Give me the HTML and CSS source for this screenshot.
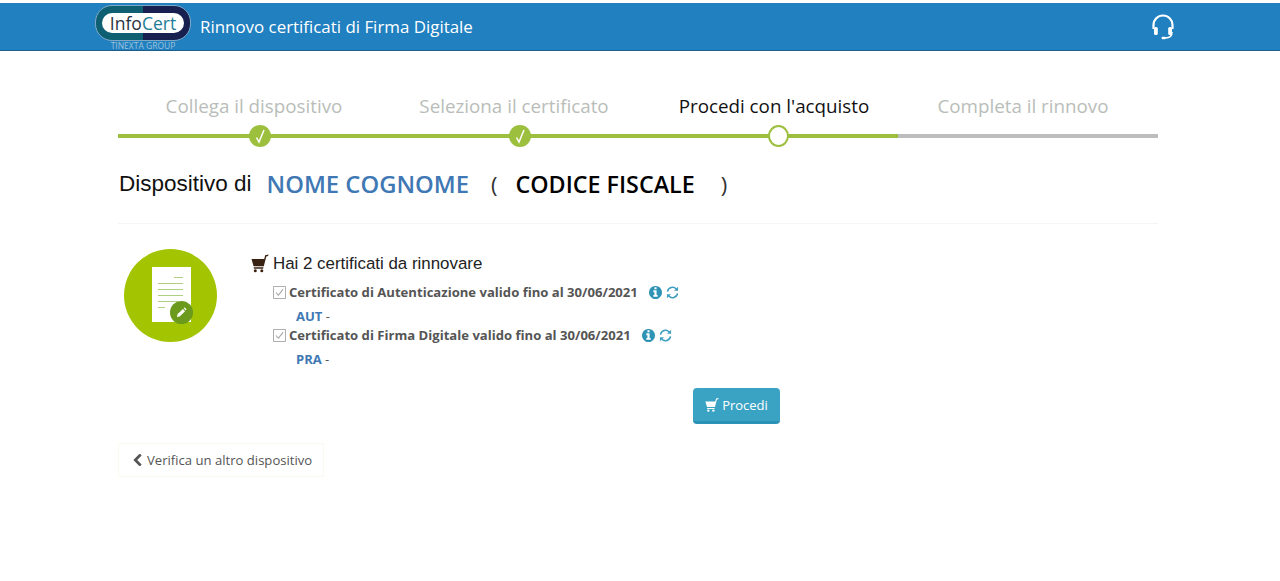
FILE: index.html
```html
<!DOCTYPE html>
<html lang="en">
<head>
    <meta charset="UTF-8">
    <meta name="viewport" content="width=device-width, initial-scale=1.0">
    <title>Rinnovo certificati di Firma Digitale</title>
    <link rel="stylesheet" href="styles.css">
</head>
<body>

    <svg class="icon-defs" aria-hidden="true">
        <symbol id="i-cart" viewBox="0 0 18 18">
            <path d="M.5 4.500h12.700l1-3.700 3.300-.8-.4 1.500-1.800.5-2.500 9.700H2.600z"/>
            <path d="M2.600 12.700h9.900l-.4 1.500H3z"/>
            <circle cx="4.300" cy="16.200" r="1.500"/>
            <circle cx="10.800" cy="16.200" r="1.500"/>
        </symbol>
        <symbol id="i-info" viewBox="0 0 1536 1536">
            <path d="M1024 1248v-160q0-14-9-23t-23-9h-96v-512q0-14-9-23t-23-9h-320q-14 0-23 9t-9 23v160q0 14 9 23t23 9h96v320h-96q-14 0-23 9t-9 23v160q0 14 9 23t23 9h448q14 0 23-9t9-23zm-128-896v-160q0-14-9-23t-23-9h-192q-14 0-23 9t-9 23v160q0 14 9 23t23 9h192q14 0 23-9t9-23zm640 416q0 209-103 385.5t-279.5 279.5-385.5 103-385.5-103-279.5-279.5-103-385.5 103-385.5 279.5-279.5 385.5-103 385.5 103 279.5 279.5 103 385.5z"/>
        </symbol>
        <symbol id="i-refresh" viewBox="0 0 14 14">
            <path d="M1.600 6A5.400 5.400 0 0 1 11 3.300M12.400 8A5.400 5.400 0 0 1 3 10.700" fill="none" stroke="#3d9ebf" stroke-width="1.600"/>
            <path d="M13 .8v4.400H8.600zM1 13.200V8.800h4.400z" fill="#3d9ebf"/>
        </symbol>
        <symbol id="i-check" viewBox="0 0 14 14">
            <path d="M.5.5h13v13H.5z" fill="none" stroke="#a5a5a5"/>
            <path d="M3.200 7l2.600 3 5-6.400" fill="none" stroke="#a0a0a0" stroke-width="1.100"/>
        </symbol>
        <symbol id="i-tick" viewBox="0 0 22 22">
            <path d="M7.500 12.500l2.500 4.500 5-12" fill="none" stroke="#fff" stroke-width="1.500"/>
        </symbol>
    </svg>

    <header class="topbar">
        <div class="logo">
            <div class="logo-ring">
                <div class="logo-pill"><span class="logo-info">Info</span><span class="logo-cert">Cert</span></div>
            </div>
            <div class="logo-group">TINEXTA GROUP</div>
        </div>
        <div class="topbar-title">Rinnovo certificati di Firma Digitale</div>
        <svg class="headset" viewBox="0 0 24 26" fill="none" stroke="#fff">
            <path d="M2.500 15V11a9.500 9.500 0 0 1 19 0v4" stroke-width="2.200"/>
            <rect x="3" y="13" width="3.800" height="8" rx="1.600" fill="#fff" stroke="none"/>
            <rect x="17.200" y="13" width="3.800" height="8" rx="1.600" fill="#fff" stroke="none"/>
            <path d="M21 18c0 4-2.500 6-6.500 6" stroke-width="1.600"/>
            <rect x="10.500" y="22.700" width="4.500" height="2.600" rx="1.300" fill="#fff" stroke="none"/>
        </svg>
    </header>

    <div class="container">

        <!-- Steps -->
        <div class="steps">
            <div class="step done">
                <div class="step-label">Collega il dispositivo</div>
                <div class="step-line"><span class="step-dot"><svg class="tick"><use href="#i-tick"/></svg></span></div>
            </div>
            <div class="step done">
                <div class="step-label">Seleziona il certificato</div>
                <div class="step-line"><span class="step-dot"><svg class="tick"><use href="#i-tick"/></svg></span></div>
            </div>
            <div class="step current">
                <div class="step-label">Procedi con l'acquisto</div>
                <div class="step-line"><span class="step-dot"></span></div>
            </div>
            <div class="step todo">
                <div class="step-label">Completa il rinnovo</div>
                <div class="step-line"></div>
            </div>
        </div>

        <!-- Owner -->
        <div class="owner">
            <span class="owner-label">Dispositivo di</span>
            <span class="owner-name">NOME COGNOME</span>
            <span class="owner-paren">(</span>
            <span class="owner-code">CODICE FISCALE</span>
            <span class="owner-paren owner-close">)</span>
        </div>

        <div class="panel">
            <div class="doc-badge">
                <div class="doc-sheet">
                    <span class="doc-line short"></span>
                    <span class="doc-line"></span>
                    <span class="doc-line"></span>
                    <span class="doc-line"></span>
                    <span class="doc-line mid"></span>
                    <span class="doc-line tiny"></span>
                </div>
                <div class="doc-pen">
                    <svg viewBox="0 0 12 12" width="11" height="11"><path d="M1 11l.6-3L7.500 2.100l2.400 2.400L4 10.400zM8.300 1.300l.6-.5q.5-.4 1 0l1.300 1.300q.4.500 0 1l-.5.600z" fill="#fff"/></svg>
                </div>
            </div>

            <div class="cert-area">
                <div class="cert-title">
                    <svg class="cart-icon"><use href="#i-cart"/></svg>
                    Hai 2 certificati da rinnovare
                </div>

                <div class="cert-row">
                    <svg class="check-icon"><use href="#i-check"/></svg>
                    <span class="cert-name">Certificato di Autenticazione valido fino al 30/06/2021</span>
                    <svg class="info-icon"><use href="#i-info"/></svg>
                    <svg class="refresh-icon"><use href="#i-refresh"/></svg>
                </div>
                <div class="cert-type"><b>AUT</b> -</div>

                <div class="cert-row">
                    <svg class="check-icon"><use href="#i-check"/></svg>
                    <span class="cert-name">Certificato di Firma Digitale valido fino al 30/06/2021</span>
                    <svg class="info-icon"><use href="#i-info"/></svg>
                    <svg class="refresh-icon"><use href="#i-refresh"/></svg>
                </div>
                <div class="cert-type"><b>PRA</b> -</div>
            </div>
        </div>

        <div class="actions">
            <a href="#" class="btn-proceed"><svg class="btn-cart"><use href="#i-cart"/></svg>Procedi</a>
        </div>

        <a href="#" class="btn-back">
            <svg class="back-icon" viewBox="256 64 1216 1536"><path d="M1427 301l-531 531 531 531q19 19 19 45t-19 45l-166 166q-19 19-45 19t-45-19l-742-742q-19-19-19-45t19-45l742-742q19-19 45-19t45 19l166 166q19 19 19 45t-19 45z"/></svg>
            Verifica un altro dispositivo
        </a>
    </div>

</body>
</html>
```

FILE: styles.css
```css
body {
    font-family: 'Open Sans', sans-serif;
    background-color: white;
    margin: 0;
    padding: 0;
}

.icon-defs {
    display: none;
}

.topbar {
    margin-top: 3px;
    height: 47px;
    background-color: #2180c0;
    border-bottom: 1px solid #1b5f8e;
    display: flex;
    align-items: center;
    padding-left: 95px;
    padding-right: 105px;
    color: white;
}

.logo {
    width: 96px;
    height: 47px;
    text-align: center;
}

.logo-ring {
    box-sizing: border-box;
    height: 36px;
    margin-top: 2px;
    padding: 7px 6px;
    border-radius: 17px;
    background: linear-gradient(90deg, #0f5f73 50%, #17204f 50%);
    border: 1px solid #7ea9c6;
}

.logo-pill {
    height: 20px;
    border-radius: 10px;
    background-color: white;
    font-size: 17.5px;
    line-height: 20px;
}

.logo-info {
    color: #27343f;
}

.logo-cert {
    color: #1d7d96;
}

.logo-group {
    font-size: 8.500px;
    line-height: 9px;
    color: #9ec3da;
}

.topbar-title {
    margin-left: 9px;
    font-size: 16.900px;
    flex: 1;
}

.headset {
    width: 24px;
    height: 26px;
}

.container {
    width: 1040px;
    margin-left: 118px;
}

/* Steps */
.steps {
    display: flex;
    margin-top: 43px;
}

.step {
    flex: 1;
}

.step-label {
    font-size: 18.800px;
    line-height: 24px;
    color: #b9bdb9;
    text-align: center;
    padding-left: 12px;
}

.step.current .step-label {
    color: #111;
}

.step.todo .step-label {
    padding-left: 0;
    padding-right: 10px;
}

.step-line {
    position: relative;
    height: 4px;
    margin-top: 16px;
    background-color: #9dbf3e;
}

.step.todo .step-line {
    background-color: #bdbdbd;
}

.step-dot {
    position: absolute;
    left: 131px;
    top: -9px;
    box-sizing: border-box;
    width: 22px;
    height: 22px;
    border-radius: 50%;
    background-color: #9dbf3e;
}

.step.current .step-dot {
    left: 130px;
    width: 21px;
    background-color: white;
    border: 2px solid #9dbf3e;
}

.tick {
    display: block;
    width: 22px;
    height: 22px;
}

/* Owner */
.owner {
    margin-top: 26px;
    padding-bottom: 19px;
    border-bottom: 1px solid #f5f5f5;
    height: 40px;
    display: flex;
    align-items: center;
    color: #111;
}

.owner-label {
    font-family: 'Liberation Sans', sans-serif;
    font-size: 22.500px;
    margin-left: 1px;
}

.owner-name {
    font-size: 23.800px;
    font-weight: 600;
    color: #4078b4;
    margin-left: 15px;
}

.owner-paren {
    font-size: 22px;
    margin-left: 22px;
    color: #333;
}

.owner-code {
    font-size: 23.300px;
    font-weight: 600;
    color: black;
    margin-left: 18px;
}

.owner-close {
    margin-left: 26px;
}

/* Certificates */
.panel {
    display: flex;
    margin-top: 25px;
}

.doc-badge {
    position: relative;
    width: 93px;
    height: 93px;
    margin-left: 6px;
    border-radius: 50%;
    background-color: #a3c400;
    flex-shrink: 0;
}

.doc-sheet {
    position: absolute;
    left: 28px;
    top: 18px;
    width: 39px;
    height: 55px;
    box-sizing: border-box;
    padding: 10px 8px 0 6px;
    background-color: white;
    display: flex;
    flex-direction: column;
    align-items: flex-end;
    gap: 5px;
}

.doc-line {
    display: block;
    width: 25px;
    height: 1px;
    background-color: #b0cf80;
}

.doc-line.short {
    width: 9px;
}

.doc-line.mid {
    width: 20px;
    align-self: flex-start;
}

.doc-line.tiny {
    width: 7px;
    align-self: flex-start;
}

.doc-pen {
    position: absolute;
    left: 46px;
    top: 52px;
    width: 23px;
    height: 23px;
    border-radius: 50%;
    background-color: #6b9a1c;
    display: flex;
    align-items: center;
    justify-content: center;
}

.cert-area {
    margin-left: 34px;
    padding-top: 4px;
}

.cert-title {
    display: flex;
    align-items: center;
    margin-bottom: 8px;
    font-family: 'Liberation Sans', sans-serif;
    font-size: 16.900px;
    line-height: 22px;
    color: #222;
}

.cart-icon {
    width: 18px;
    height: 19px;
    margin-right: 4px;
    margin-top: -2px;
    fill: #3a2212;
}

.cert-row {
    display: flex;
    align-items: center;
    margin-top: 1px;
    margin-left: 22px;
    height: 18px;
}

.check-icon {
    width: 13px;
    height: 13px;
    margin-right: 3px;
}

.cert-name {
    font-size: 13.100px;
    font-weight: 700;
    color: #555;
}

.info-icon {
    width: 13px;
    height: 13px;
    margin-left: 11px;
    fill: #2f93b5;
}

.refresh-icon {
    width: 13px;
    height: 13px;
    margin-left: 4px;
}

.cert-type {
    margin-left: 45px;
    margin-top: 6px;
    font-size: 13px;
    line-height: 18px;
    color: #555;
}

.cert-type b {
    color: #4078b4;
    font-weight: 700;
}

.actions {
    margin-top: 20px;
    padding-left: 575px;
}

.btn-proceed {
    box-sizing: border-box;
    display: flex;
    align-items: center;
    justify-content: center;
    width: 87px;
    height: 36px;
    background-color: #3aa3c4;
    border-bottom: 3px solid #2a93b5;
    border-radius: 4px;
    color: white;
    font-size: 13px;
    text-decoration: none;
}

.btn-cart {
    width: 14px;
    height: 14px;
    margin-right: 3px;
    fill: white;
}

.btn-back {
    box-sizing: border-box;
    display: flex;
    align-items: center;
    width: 206px;
    height: 34px;
    margin-top: 19px;
    padding-left: 12px;
    border: 1px solid #fcf9f3;
    color: #555;
    font-size: 13.100px;
    text-decoration: none;
}

.back-icon {
    width: 12px;
    height: 12px;
    margin-right: 4px;
    fill: #555;
}
```
